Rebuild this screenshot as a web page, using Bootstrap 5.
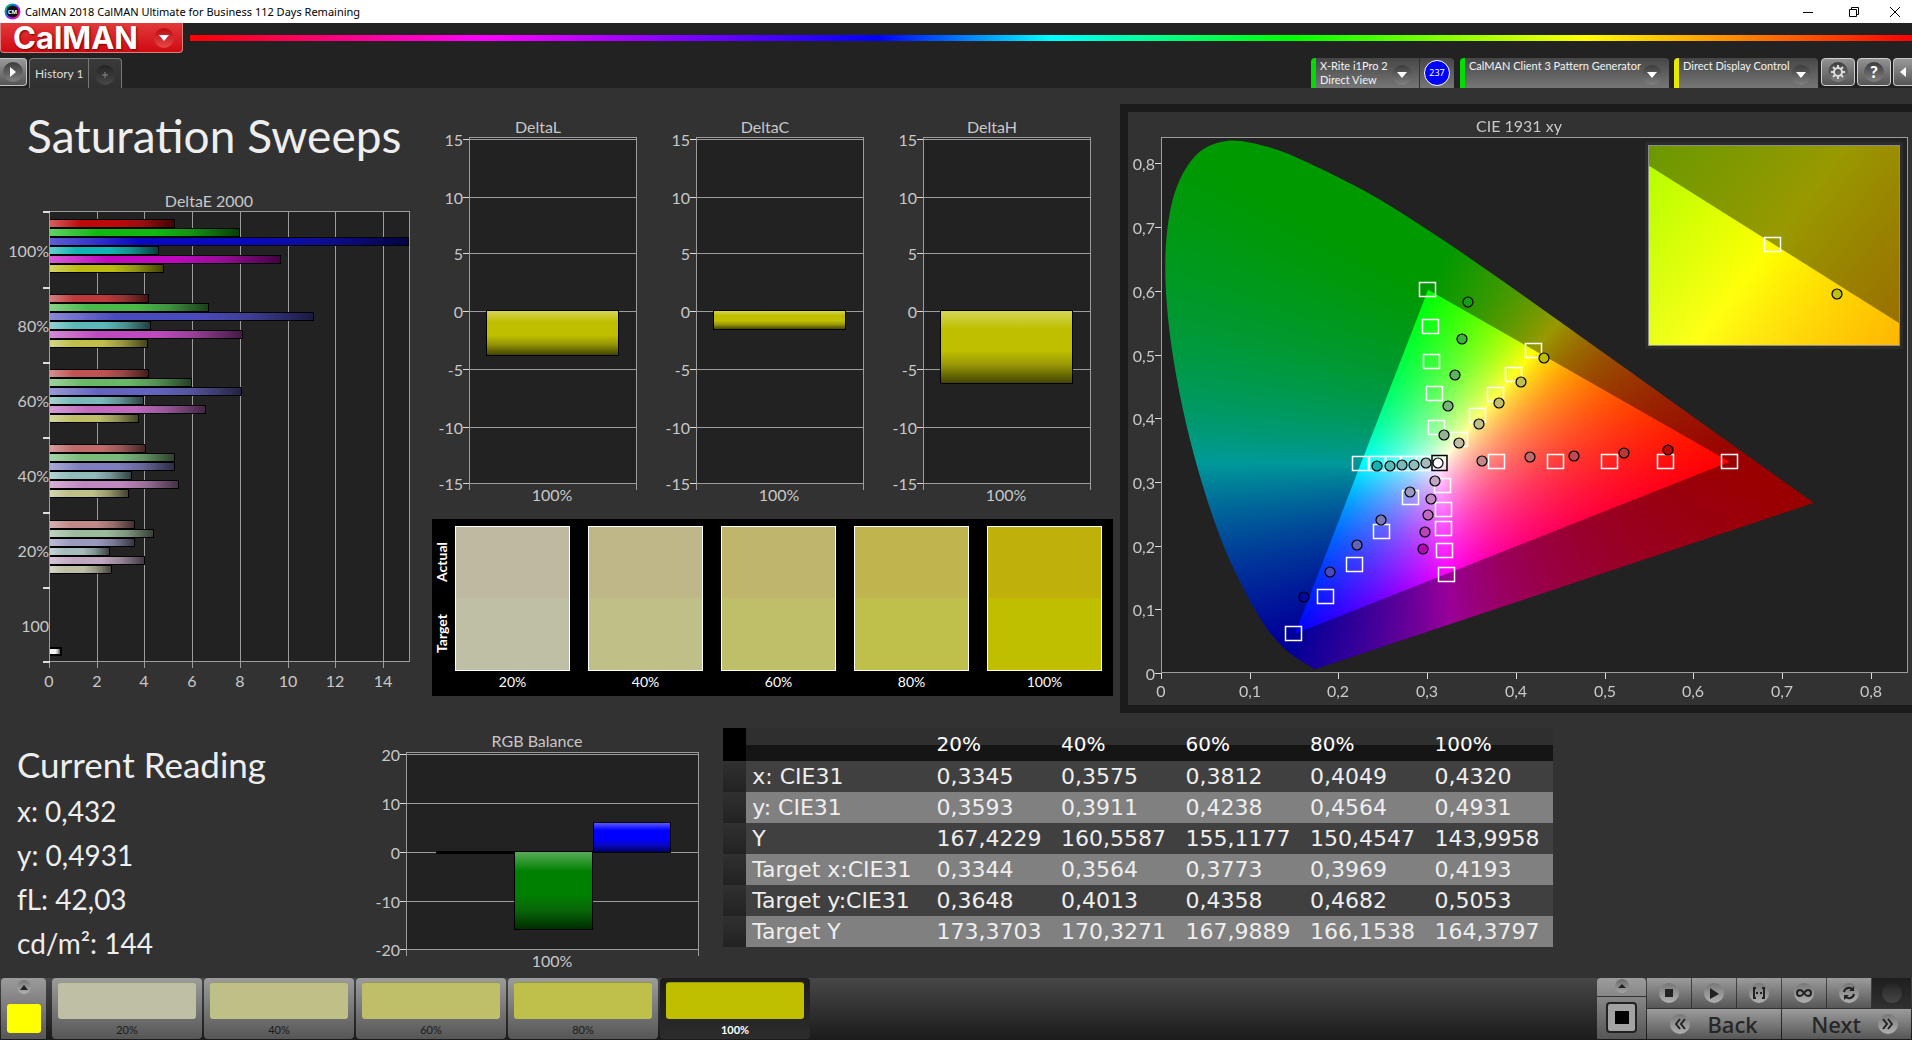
<!DOCTYPE html>
<html lang="en">
<head>
<meta charset="utf-8">
<meta name="viewport" content="width=device-width, initial-scale=1">
<title>CalMAN 2018</title>
<link href="https://cdn.jsdelivr.net/npm/bootstrap@5.3.0/dist/css/bootstrap.min.css" rel="stylesheet">
<style>
  :root { --ink: #c8c8c8; --panel: #323232; --deep: #222222; }
  body { font-family: Lato, "Liberation Sans", sans-serif; background: var(--panel); color: #eee; overflow-x: hidden; }
  button { font-family: inherit; }
  .win-bar { height: 23px; background: #fff; color: #000; font: 11px/23px "Noto Sans", sans-serif; }
  .win-ctl { width: 46px; height: 23px; border: 0; background: none; padding: 0; line-height: 0; }
  .win-ctl.last { width: 35px; }
  .app-head { background: var(--deep); height: 65px; }
  .brand-btn { width: 183px; height: 30px; border: 1px solid #d98080; border-top: 0; border-radius: 0 0 4px 4px; background: linear-gradient(#e23a3a, #cf0a12); color: #fff; }
  .brand-name { font: 700 31px/29px Inter, sans-serif; text-shadow: 1px 1px 2px #700; }
  .rainbow { height: 6px; margin: 12px 0 0 7px; background: linear-gradient(90deg, red, magenta 17%, blue 40%, cyan 50%, lime 64%, yellow 81%, red); }
  .knob { width: 20px; height: 20px; border-radius: 50%; display: inline-flex; align-items: center; justify-content: center; background: linear-gradient(#3c3c3c, #808080); flex: none; }
  .knob.red { background: linear-gradient(#b80c12, #e64848); }
  .knob.dim { background: linear-gradient(#242424, #484848); }
  .side-btn { width: 27px; height: 28px; border: 1px solid #c4c4c4; border-left: 0; border-radius: 0 4px 4px 0; background: linear-gradient(#9a9a9a, #555); padding: 0; margin-right: 2px; display: flex; align-items: center; justify-content: center; }
  .side-btn.right { width: 19px; margin: 0; border: 1px solid #c4c4c4; border-right: 0; border-radius: 4px 0 0 4px; }
  .tabs-left { height: 30px; border: 1px solid #777; border-bottom: 0; border-radius: 4px 4px 0 0; background: linear-gradient(#3a3a3a, #303030); font-size: 12px; overflow: hidden; }
  .tabs-left a { color: #ddd; text-decoration: none; padding: 0 5px; line-height: 30px; width: 58px; white-space: nowrap; }
  .tabs-left button { width: 33px; border: 0; border-left: 1px solid #777; background: none; padding: 2px 0 0; }
  .dev { height: 30px; border: 0; border-radius: 4px 4px 0 0; border-left: 5px solid #0d0; background: linear-gradient(#464646, #767676); color: #f2f2f2; font-size: 11px; line-height: 14px; padding: 1px 7px 0 4px; display: flex; text-align: left; white-space: nowrap; }
  .dev.warn { border-left-color: #e8e800; width: 144px; margin-right: 3px; }
  .dev.meter-dev { width: 108px; border-top-right-radius: 0; }
  .dev.source-dev { width: 209px; margin: 0 5px 0 6px; }
  .dev .knob { margin-top: 6px; }
  .meter { width: 35px; height: 30px; border-left: 1px solid #333; background: linear-gradient(#464646, #767676); border-radius: 0 4px 0 0; display: flex; align-items: center; justify-content: center; }
  .meter span { width: 26px; height: 26px; border-radius: 50%; background: #00f; border: 1px solid #fff; font: 9px/24px "Noto Sans", sans-serif; color: #fff; text-align: center; }
  .tool { width: 34px; height: 28px; border: 1px solid #d0d0d0; border-radius: 4px; background: linear-gradient(#929292, #555); padding: 0; margin-right: 2px; color: #fff; font-size: 17px; font-weight: 900; line-height: 20px; display: flex; align-items: center; justify-content: center; }
  .top-grid { display: grid; grid-template-columns: 432fr 681fr 7fr 792fr; min-height: 628px; }
  .low-grid { display: grid; grid-template-columns: 365fr 358fr 830fr 359fr; }
  .sheet-title { font-size: 46px; line-height: 52px; margin: 0; padding: 22px 0 0 27px; height: 102px; white-space: nowrap; font-weight: 400; }
  svg.plot { display: block; width: 100%; height: auto; font-size: 16px; fill: var(--ink); }
  .plot text { dominant-baseline: central; }
  .strip { background: #000; height: 177px; padding: 7px 11px 0 0; font-size: 14px; line-height: 20px; color: #fff; }
  .strip-side { width: 23px; height: 144px; }
  .strip-side span { writing-mode: vertical-rl; transform: rotate(180deg); flex: 1; text-align: center; line-height: 20px; font-weight: 700; }
  .strip-cells { gap: 18px; }
  .strip-cell { flex: 1; text-align: center; }
  .strip-box { height: 145px; border: 1px solid #fff; margin-bottom: 1px; }
  .cie-frame { margin-top: 16px; border: 8px solid #1b1b1b; border-right: 0; height: fit-content; display: grid; background: var(--panel); }
  .cie-frame > * { grid-area: 1 / 1; width: 100%; }
  .read { padding: 26px 0 0 17px; font-size: 28px; line-height: 44px; color: #eee; }
  .read h2 { font-size: 35px; line-height: 44px; margin: 0 0 3px; font-weight: 400; }
  .read p { margin: 0; }
  .grid-data { table-layout: fixed; width: 100%; margin-top: 12px; font: 22px/31px "DejaVu Sans", sans-serif; color: #eee; }
  .grid-data th, .grid-data td { padding: 0 0 0 6px; height: 31px; font-weight: 400; white-space: nowrap; text-align: left; overflow: visible; }
  .grid-data thead th { height: 33px; font-size: 20px; line-height: 33px; background: linear-gradient(#2f2f2f 50%, #141414 52%, #161616); color: #fff; }
  .grid-data thead td { background: #000; }
  .grid-data tbody tr { background: #404040; }
  .grid-data tbody tr:nth-child(even) { background: #808080; }
  .grid-data tbody td:first-child { background: linear-gradient(#303030, #222); }
  .dock { height: 62px; background: linear-gradient(#474747, #1b1b1b); }
  .face { background: linear-gradient(#9c9c9c, #565656); border: 0; padding: 0; }
  .pick { width: 45px; height: 61px; border-radius: 4px 4px 0 0; margin: 0 6px 0 1px; display: flex; flex-direction: column; align-items: center; padding-top: 2px; }
  .pick i { width: 34px; height: 29px; background: #ff0; border-radius: 3px; margin-top: 10px; }
  .pad { width: 150px; height: 61px; border-radius: 4px; padding: 4px 6px 0; font-size: 11px; line-height: 20px; color: #1c1c1c; text-align: center; margin-right: 2px; }
  .pad i { display: block; height: 37px; margin-bottom: 1px; border-radius: 3px; border-top: 1px solid #0003; }
  .pad.on { background: linear-gradient(#1c1c1c, #2c2c2c); color: #fff; font-weight: 700; }
  .knob.lite { background: linear-gradient(#777, #b0b0b0); }
  .knob.k14 { width: 14px; height: 14px; }
  .window-btn { width: 49px; height: 61px; border-radius: 4px 4px 0 0; margin-right: 1px; }
  .xport { display: grid; grid-template-columns: repeat(5, 44px) 39px; gap: 1px; grid-template-rows: 30px 30px; width: 265px; }
  .xport .wide { grid-column: span 3; }
  .xport button { border-radius: 0; color: #262626; display: flex; align-items: center; justify-content: center; }
  .xport .busy { background: linear-gradient(#1e1e1e, #303030); }
  .xport .move { font: 500 22px/30px "Noto Sans", sans-serif; gap: 17px; }
</style>
</head>
<body class="min-vh-100 d-flex flex-column">

<header>
  <div class="win-bar d-flex align-items-center">
    <svg class="mx-1" width="17" height="17" viewBox="0 0 17 17">
      <defs><linearGradient id="hue" x2="1" y2="1"><stop stop-color="#0c0"/><stop offset=".35" stop-color="#08f"/><stop offset=".65" stop-color="#c0f"/><stop offset="1" stop-color="#f30"/></linearGradient></defs>
      <circle cx="8.500" cy="8.500" r="8" fill="url(#hue)"/><circle cx="8.500" cy="8.500" r="6" fill="#111"/>
      <text x="8.500" y="11" font-size="6" font-weight="700" text-anchor="middle" fill="#fff">CM</text>
    </svg>
    <span class="flex-grow-1">CalMAN 2018 CalMAN Ultimate for Business 112 Days Remaining</span>
    <button class="win-ctl" aria-label="Minimize"><svg width="12" height="12"><path d="M1 6.500h10" stroke="#000"/></svg></button>
    <button class="win-ctl" aria-label="Restore"><svg width="12" height="12" fill="none" stroke="#000"><path d="M1.500 3.500h7v7h-7zM3.500 3.500v-2h7v7h-2"/></svg></button>
    <button class="win-ctl last" aria-label="Close"><svg width="12" height="12"><path d="M1 1l10 10M11 1L1 11" stroke="#000"/></svg></button>
  </div>

  <div class="app-head d-flex flex-column justify-content-between">
    <div class="d-flex">
      <button class="brand-btn d-flex align-items-center justify-content-between px-2" aria-label="CalMAN menu">
        <span class="brand-name ps-1">CalMAN</span>
        <span class="knob red"><svg width="10" height="6"><path d="M0 0h10L5 6z" fill="#fff"/></svg></span>
      </button>
      <div class="rainbow flex-grow-1"></div>
    </div>
    <div class="d-flex justify-content-between align-items-start">
      <nav class="d-flex">
        <button class="side-btn" aria-label="Expand"><span class="knob"><svg width="6" height="10"><path d="M0 0v10l6-5z" fill="#fff"/></svg></span></button>
        <div class="tabs-left d-flex">
          <a href="#">History 1</a>
          <button aria-label="Add tab"><span class="knob dim"><svg width="8" height="8"><path d="M4 1v6M1 4h6" stroke="#888"/></svg></span></button>
        </div>
      </nav>
      <div class="d-flex">
        <button class="dev meter-dev"><span class="flex-grow-1">X-Rite i1Pro 2<br>Direct View</span><span class="knob"><svg width="10" height="6"><path d="M0 0h10L5 6z" fill="#fff"/></svg></span></button>
        <div class="meter"><span>237</span></div>
        <button class="dev source-dev"><span class="flex-grow-1">CalMAN Client 3 Pattern Generator</span><span class="knob"><svg width="10" height="6"><path d="M0 0h10L5 6z" fill="#fff"/></svg></span></button>
        <button class="dev warn"><span class="flex-grow-1">Direct Display Control</span><span class="knob"><svg width="10" height="6"><path d="M0 0h10L5 6z" fill="#fff"/></svg></span></button>
        <button class="tool" aria-label="Settings"><span class="knob"><svg width="16" height="16" viewBox="0 0 16 16"><circle cx="8" cy="8" r="4" fill="none" stroke="#ddd" stroke-width="2"/><path d="M8 1v3M8 12v3M1 8h3M12 8h3M3 3l2 2M11 11l2 2M13 3l-2 2M5 11l-2 2" stroke="#ddd" stroke-width="2"/></svg></span></button>
        <button class="tool" aria-label="Help"><span class="knob">?</span></button>
        <button class="side-btn right" aria-label="Collapse"><svg width="6" height="10"><path d="M6 0v10L0 5z" fill="#fff"/></svg></button>
      </div>
    </div>
  </div>
</header>

<main class="flex-grow-1">
  <section class="top-grid">
    <div>
      <h1 class="sheet-title">Saturation Sweeps</h1>
      <svg class="plot" id="deltaE" viewBox="0 190 432 510"></svg>
    </div>
    <div>
      <div class="row row-cols-3 g-0 pt-4">
        <div class="col"><svg class="plot delta" viewBox="0 112 227 407" data-name="DeltaL" data-end="356"></svg></div>
        <div class="col"><svg class="plot delta" viewBox="0 112 227 407" data-name="DeltaC" data-end="330"></svg></div>
        <div class="col"><svg class="plot delta" viewBox="0 112 227 407" data-name="DeltaH" data-end="384"></svg></div>
      </div>
      <div class="strip d-flex">
        <div class="strip-side d-flex flex-column"><span>Actual</span><span>Target</span></div>
        <div class="strip-cells d-flex flex-grow-1" id="cells"></div>
      </div>
    </div>
    <div></div>
    <div class="cie-frame">
      <canvas id="gamut" width="784" height="593"></canvas>
      <svg class="plot" id="cie" viewBox="1128 111 784 593"></svg>
    </div>
  </section>

  <section class="low-grid">
    <div class="read">
      <h2>Current Reading</h2>
      <p>x: 0,432</p><p>y: 0,4931</p><p>fL: 42,03</p><p>cd/m²: 144</p>
    </div>
    <div><svg class="plot" id="rgb" viewBox="365 716 358 262"></svg></div>
    <div>
      <table class="grid-data">
        <colgroup><col style="width:2.8%"><col style="width:22.2%"><col><col><col><col><col></colgroup>
        <thead><tr><td></td><th></th><th>20%</th><th>40%</th><th>60%</th><th>80%</th><th>100%</th></tr></thead>
        <tbody>
          <tr><td></td><th>x: CIE31</th><td>0,3345</td><td>0,3575</td><td>0,3812</td><td>0,4049</td><td>0,4320</td></tr>
          <tr><td></td><th>y: CIE31</th><td>0,3593</td><td>0,3911</td><td>0,4238</td><td>0,4564</td><td>0,4931</td></tr>
          <tr><td></td><th>Y</th><td>167,4229</td><td>160,5587</td><td>155,1177</td><td>150,4547</td><td>143,9958</td></tr>
          <tr><td></td><th>Target x:CIE31</th><td>0,3344</td><td>0,3564</td><td>0,3773</td><td>0,3969</td><td>0,4193</td></tr>
          <tr><td></td><th>Target y:CIE31</th><td>0,3648</td><td>0,4013</td><td>0,4358</td><td>0,4682</td><td>0,5053</td></tr>
          <tr><td></td><th>Target Y</th><td>173,3703</td><td>170,3271</td><td>167,9889</td><td>166,1538</td><td>164,3797</td></tr>
        </tbody>
      </table>
    </div>
  </section>
</main>

<footer class="dock d-flex justify-content-between">
  <div class="d-flex">
    <button class="face pick" aria-label="Pattern color"><span class="knob lite k14"><svg width="8" height="5"><path d="M0 5h8L4 0z" fill="#222"/></svg></span><i></i></button>
    <button class="face pad"><i style="background:#bfbfa5"></i>20%</button>
    <button class="face pad"><i style="background:#bfbf88"></i>40%</button>
    <button class="face pad"><i style="background:#bfbf6a"></i>60%</button>
    <button class="face pad"><i style="background:#bfbf4b"></i>80%</button>
    <button class="face pad on"><i style="background:#bfbf00"></i>100%</button>
  </div>
  <div class="d-flex">
    <button class="face window-btn" aria-label="Window pattern">
      <svg width="49" height="61" class="d-block"><defs><linearGradient id="kn" x2="0" y2="1"><stop stop-color="#6a6a6a"/><stop offset="1" stop-color="#a4a4a4"/></linearGradient></defs>
        <circle cx="25" cy="8" r="7" fill="url(#kn)"/><path d="M21 10h8l-4-4z" fill="#222"/><path d="M0 18.500h49" stroke="#333"/>
        <rect x="10" y="25" width="29" height="29" rx="3" fill="#a2a2a2" stroke="#222" stroke-width="2"/><rect x="18" y="33" width="14" height="13" fill="#000"/></svg>
    </button>
    <div class="xport">
      <button class="face" aria-label="Stop"><span class="knob lite"><svg width="8" height="8"><path d="M0 0h8v8H0z" fill="#222"/></svg></span></button>
      <button class="face" aria-label="Play"><span class="knob lite"><svg width="10" height="11"><path d="M1 0v11l9-5z" fill="#222"/></svg></span></button>
      <button class="face" aria-label="Read series"><span class="knob lite"><svg width="14" height="12" fill="none" stroke="#222" stroke-width="2"><path d="M4 1H2v10h2M10 1h2v10h-2M4 6h2M8 6h2"/></svg></span></button>
      <button class="face" aria-label="Read continuous"><span class="knob lite"><svg width="16" height="8" fill="none" stroke="#222" stroke-width="2"><path d="M8 4C6 1 5 1 4 1a3 3 0 0 0 0 6c1 0 2 0 4-3s3-3 4-3a3 3 0 0 1 0 6c-1 0-2 0-4-3z"/></svg></span></button>
      <button class="face" aria-label="Refresh"><span class="knob lite"><svg width="14" height="14" fill="none" stroke="#222" stroke-width="2"><path d="M2 6a5 5 0 0 1 9-2M12 8a5 5 0 0 1-9 2"/><path d="M12 0v5H7zM2 14V9h5z" fill="#222" stroke="none"/></svg></span></button>
      <button class="face busy" aria-label="Busy"><span class="knob dim"></span></button>
      <button class="face move wide"><span class="knob lite"><svg width="11" height="12" fill="none" stroke="#222" stroke-width="2"><path d="M5 1L1 6l4 5M10 1L6 6l4 5"/></svg></span>Back</button>
      <button class="face move wide ps-3"><span>Next</span><span class="knob lite"><svg width="11" height="12" fill="none" stroke="#222" stroke-width="2"><path d="M1 1l4 5-4 5M6 1l4 5-4 5"/></svg></span></button>
    </div>
  </div>
</footer>

<script src="https://cdn.jsdelivr.net/npm/bootstrap@5.3.0/dist/js/bootstrap.bundle.min.js"></script>
<script>
const NS = 'http://www.w3.org/2000/svg';
function add(svg, name, attrs, text) {
  const e = document.createElementNS(NS, name);
  for (const k in attrs) e.setAttribute(k, attrs[k]);
  if (text !== undefined) e.textContent = text;
  svg.appendChild(e);
  return e;
}
const box = (s, x, y, w, h, fill, stroke, sw = 1) =>
  add(s, 'rect', { x, y, width: w, height: h, fill, stroke: stroke || 'none', 'stroke-width': sw });
// one-unit-thick rules, drawn as filled strips so they stay sharp
const hrule = (s, x1, x2, y, c = '#9c9c9c') => box(s, x1, y, x2 - x1, 1, c);
const vrule = (s, x, y1, y2, c = '#9c9c9c') => box(s, x, y1, 1, y2 - y1, c);
const label = (s, x, y, t, anchor = 'middle') => add(s, 'text', { x, y: y - 1, 'text-anchor': anchor }, t);

function mix(hex, to, k) {
  const n = parseInt(hex.slice(1), 16);
  return 'rgb(' + [n >> 16, n >> 8 & 255, n & 255].map(v => Math.round(v + (to - v) * k)).join() + ')';
}
function shade(svg, hex, vertical) {
  const id = 'g' + hex.slice(1) + (vertical ? 'v' : 'h');
  if (!document.getElementById(id)) {
    const g = add(svg, 'linearGradient', vertical ? { id, x2: 0, y2: 1 } : { id });
    [[0, mix(hex, 255, .35)], [.25, hex], [.55, hex], [.75, mix(hex, 30, .25)], [1, mix(hex, 0, .65)]]
      .forEach(([offset, c]) => add(g, 'stop', { offset, 'stop-color': c }));
  }
  return `url(#${id})`;
}
function bar(s, x1, y1, x2, y2, hex, vertical) {
  box(s, x1, y1, x2 - x1, y2 - y1, '#000');
  box(s, x1 + 1, y1 + 1, x2 - x1 - 2, y2 - y1 - 2, shade(s, hex, vertical));
}

// Delta E 2000
(() => {
  const s = document.getElementById('deltaE');
  label(s, 209, 201, 'DeltaE 2000');
  box(s, 49, 211, 360, 451, '#222');
  for (let i = 0; i <= 7; i++) {
    const x = Math.round(49 + i * 47.7);
    vrule(s, x, 212, 668);
    label(s, x, 681, i * 2);
  }
  vrule(s, 409, 211, 662);
  hrule(s, 50, 410, 211); hrule(s, 50, 410, 661);
  [211, 287, 362, 437, 512, 587, 661].forEach(y => box(s, 43, y, 7, 2, '#ddd'));
  ['100%', '80%', '60%', '40%', '20%', '100'].forEach((t, i) => label(s, 49, 251 + i * 75, t, 'end'));
  const groups = [
    [219, [175, 240, 409, 159, 281, 164], ['#bf0808', '#10b810', '#0808bf', '#10b4b4', '#bf08bf', '#bcbc10']],
    [294, [149, 209, 314, 151, 243, 148], ['#bf3a3a', '#4ab84a', '#4a4abf', '#5ab8b8', '#bf4abf', '#bfbf4a']],
    [369, [149, 192, 242, 144, 206, 139], ['#bf5252', '#68b868', '#6464c0', '#7ab9b9', '#bf6abf', '#bfbf6a']],
    [444, [146, 175, 175, 132, 179, 129], ['#c06a6a', '#7cba7c', '#7e7ec0', '#90bcbc', '#c088c0', '#bfbf88']],
    [520, [135, 154, 135, 110, 145, 112], ['#c08888', '#9cba9c', '#9a9ac0', '#a6bcbc', '#c0a6c0', '#bfbfa6']]
  ];
  groups.forEach(([y, ends, cols]) => ends.forEach((e, i) => {
    box(s, 50, y + i * 9, e - 50, 9, '#000');
    box(s, 50, y + 1 + i * 9, e - 51, 7, shade(s, cols[i]));
  }));
  box(s, 50, 647, 12, 9, '#000'); box(s, 50, 649, 10, 5, shade(s, '#f0f0f0'));
})();

// Delta L / C / H
document.querySelectorAll('.delta').forEach(s => {
  label(s, 106, 127, s.dataset.name);
  box(s, 38, 138, 167, 346, '#222');
  hrule(s, 38, 205, 137);
  [139, 197, 253, 311, 369, 427, 483].forEach((y, i) => {
    hrule(s, 38, 205, y);
    box(s, 31, y, 7, 1, '#ddd');
    label(s, 31, y + 1, 15 - i * 5, 'end');
  });
  vrule(s, 37, 137, 490); vrule(s, 204, 137, 490);
  bar(s, 54, 310, 187, +s.dataset.end, '#bfbf00', true);
  label(s, 120, 495, '100%');
});

// RGB balance
(() => {
  const s = document.getElementById('rgb');
  label(s, 537, 741, 'RGB Balance');
  box(s, 407, 753, 292, 197, '#222');
  hrule(s, 407, 699, 752);
  [754, 803, 852, 901, 949].forEach((y, i) => {
    hrule(s, 407, 699, y);
    box(s, 400, y, 7, 1, '#ddd');
    label(s, 400, y + 1, 20 - i * 10, 'end');
  });
  vrule(s, 406, 752, 956); vrule(s, 698, 752, 956);
  box(s, 436, 851, 79, 3, '#000');
  bar(s, 514, 851, 593, 930, '#008000', true);
  bar(s, 593, 822, 671, 853, '#0000ff', true);
  label(s, 552, 961, '100%');
})();

// actual / target swatches
[['#bfb9a1', '#bfbfa5', '20%'], ['#bfb788', '#bfbf88', '40%'], ['#bfb56d', '#bfbf6a', '60%'],
 ['#bfb44d', '#bfbf4b', '80%'], ['#bfb00a', '#bfbf00', '100%']].forEach(([a, t, n]) => {
  document.getElementById('cells').insertAdjacentHTML('beforeend',
    `<div class="strip-cell"><div class="strip-box" style="background:linear-gradient(${a} 50%,${t} 50%)"></div>${n}</div>`);
});

// chromaticity diagram: colour field on the canvas, axes and markers in the svg above it
(() => {
  const cv = document.getElementById('gamut'), ctx = cv.getContext('2d'), W = 784, H = 593;
  const locus = [[.1741,.005],[.1714,.0051],[.1644,.0109],[.1566,.0177],[.144,.0297],[.1241,.0578],[.1096,.0868],[.0913,.1327],
    [.0687,.2007],[.0454,.295],[.0235,.4127],[.0082,.5384],[.0039,.6548],[.0139,.7502],[.0389,.812],[.0743,.8338],[.1142,.8262],
    [.1547,.8059],[.2296,.7543],[.3016,.6923],[.3731,.6245],[.4441,.5547],[.5125,.4866],[.5752,.4242],[.627,.3725],[.6915,.3083],[.7347,.2653]];
  const tri = [[.64,.33],[.3,.6],[.15,.06]];

  function field(m, gain) {
    const c = document.createElement('canvas'); c.width = W; c.height = H;
    const g = c.getContext('2d'), im = g.createImageData(W, H);
    for (let j = 0, p = 0; j < H; j++) for (let i = 0; i < W; i++, p += 4) {
      const x = (i - m.x0) / m.kx, y = Math.max(.0001, (m.y0 - j) / m.ky);
      const X = x / y, Z = (1 - x - y) / y;
      const r = Math.max(0, 3.2406 * X - 1.5372 - .4986 * Z);
      const gr = Math.max(0, -.9689 * X + 1.8758 + .0415 * Z);
      const b = Math.max(0, .0557 * X - .204 + 1.057 * Z);
      const k = gain * 255 / Math.max(r, gr, b, .0001);
      im.data[p] = r * k; im.data[p + 1] = gr * k; im.data[p + 2] = b * k; im.data[p + 3] = 255;
    }
    g.putImageData(im, 0, 0);
    return c;
  }
  function trace(pts, m, smooth) {
    const q = pts.map(([x, y]) => [m.x0 + x * m.kx, m.y0 - y * m.ky]);
    ctx.beginPath(); ctx.moveTo(...q[0]);
    for (let i = 1; i < q.length; i++) {
      if (!smooth) { ctx.lineTo(...q[i]); continue; }
      const a = q[Math.max(0, i - 2)], b = q[i - 1], c = q[i], d = q[Math.min(q.length - 1, i + 1)];
      ctx.bezierCurveTo(b[0] + (c[0] - a[0]) / 6, b[1] + (c[1] - a[1]) / 6, c[0] - (d[0] - b[0]) / 6, c[1] - (d[1] - b[1]) / 6, c[0], c[1]);
    }
    ctx.closePath();
  }
  function paint(m) {
    ctx.save(); trace(locus, m, true); ctx.clip(); ctx.drawImage(field(m, .6), 0, 0); ctx.restore();
    ctx.save(); trace(tri, m, false); ctx.clip(); ctx.drawImage(field(m, 1), 0, 0); ctx.restore();
  }
  ctx.fillStyle = '#222'; ctx.fillRect(34, 26, 746, 535);
  paint({ x0: 34, y0: 560, kx: 887, ky: 637 });
  // magnified view around the selected target
  ctx.fillStyle = '#2c2c2c'; ctx.fillRect(517, 30, 258, 207);
  ctx.fillStyle = '#8c8c8c'; ctx.fillRect(520, 33, 252, 201);
  ctx.save(); ctx.beginPath(); ctx.rect(521, 34, 250, 199); ctx.clip();
  paint({ x0: 644 - .4193 * 5071, y0: 131 + .5053 * 4016, kx: 5071, ky: 4016 });
  ctx.restore();

  const s = document.getElementById('cie');
  label(s, 1519, 125, 'CIE 1931 xy');
  hrule(s, 1161, 1908, 136); hrule(s, 1161, 1908, 671);
  vrule(s, 1161, 137, 672); vrule(s, 1907, 137, 672);
  for (let i = 0; i <= 8; i++) {
    const t = i ? '0,' + i : '0', x = Math.round(1161 + i * 88.7), y = Math.round(672 - i * 63.7);
    vrule(s, x, 672, 678, '#ddd'); label(s, x, 690, t);
    hrule(s, 1155, 1161, y, '#ddd'); label(s, 1155, y + 1, t, 'end');
  }
  const squares = [[1427,289],[1430,326],[1431,361],[1434,393],[1436,427],
    [1533,350],[1513,374],[1495,394],[1477,415],[1459,439],
    [1496,461],[1555,461],[1609,461],[1665,461],[1729,461],
    [1360,463],[1377,463],[1393,463],[1408,463],[1424,463],
    [1442,485],[1443,509],[1443,528],[1444,550],[1446,574],
    [1410,497],[1381,531],[1354,564],[1325,596],[1293,633],[1772,244]];
  squares.forEach(([x, y]) => box(s, x - 7.5, y - 7.5, 16, 14, 'none', '#fff', 1.5));
  box(s, 1432, 454.5, 15, 15, 'none', '#000', 1.5);
  const dots = [[1468,301,'#10a010'],[1462,338,'#3cb43c'],[1455,374,'#5cb45c'],[1448,405,'#78b478'],[1444,434,'#94b494'],
    [1544,357,'#bfbf00'],[1521,381,'#bfbf4b'],[1499,402,'#bfbf6a'],[1479,423,'#bfbf88'],[1459,442,'#bfbfa5'],
    [1482,460,'#c08888'],[1530,456,'#c06a6a'],[1574,455,'#bf4a52'],[1624,452,'#b83838'],[1668,449,'#b40808'],
    [1377,465,'#10b4b4'],[1390,465,'#5ab8b8'],[1402,464,'#7ab9b9'],[1414,464,'#90bcbc'],[1426,462,'#a6bcbc'],
    [1435,480,'#c0a6c0'],[1431,498,'#c088c0'],[1428,514,'#bf6abf'],[1425,531,'#b844b8'],[1423,548,'#b408b4'],
    [1410,491,'#9a9ac0'],[1381,519,'#7878b4'],[1357,544,'#6464b4'],[1330,571,'#4a4abf'],[1304,596,'#0808a0'],
    [1438,462,'#ffffff'],[1837,293,'#bfbf10']];
  dots.forEach(([cx, cy, fill]) => add(s, 'circle', { cx, cy, r: 5, fill, stroke: '#000', 'stroke-width': 1.2 }));
})();
</script>
</body>
</html>
